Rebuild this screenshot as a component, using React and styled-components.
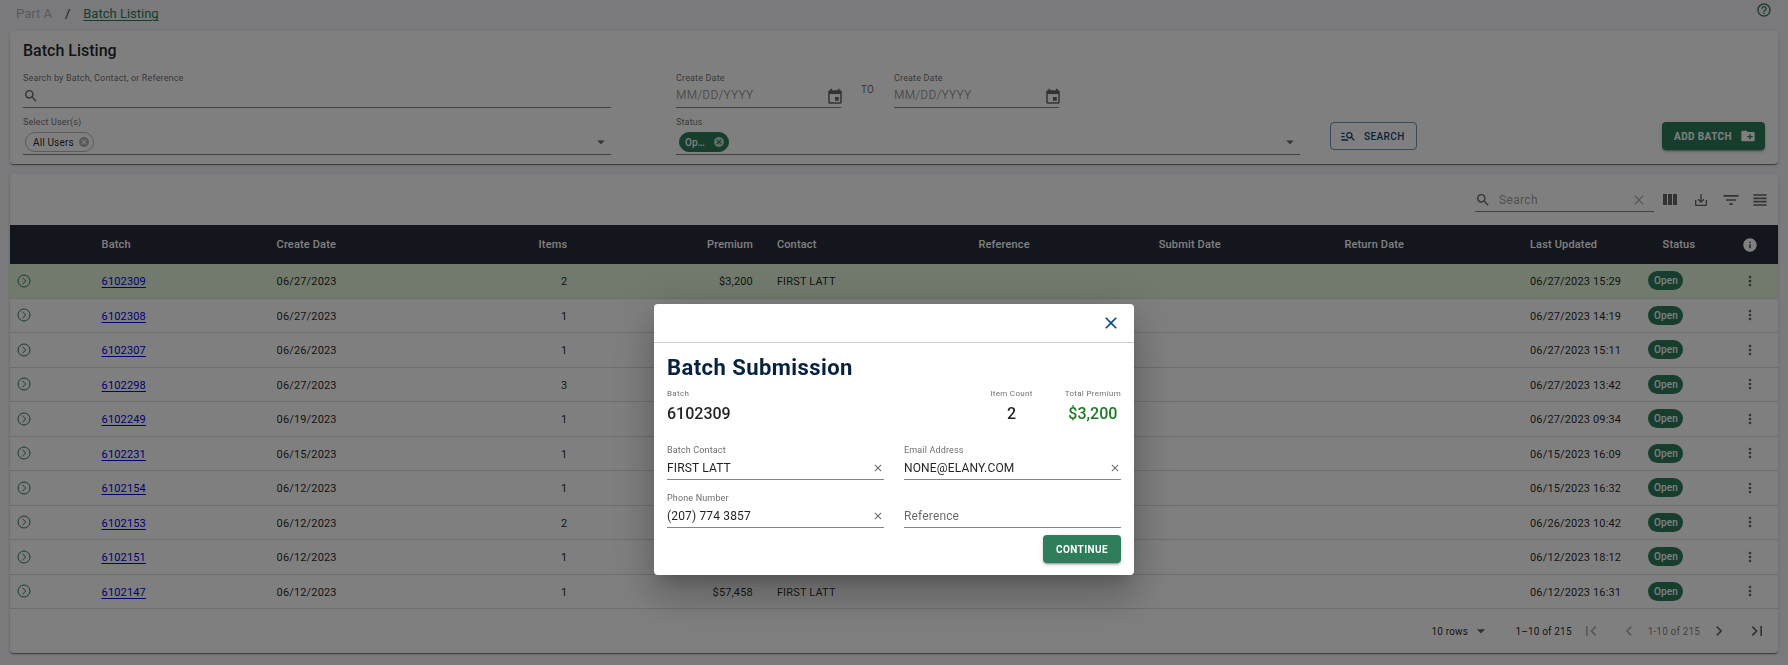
import React, { useState } from "react";
import styled, { createGlobalStyle, css } from "styled-components";
import {
  MdSearch, MdCancel, MdArrowDropDown, MdEvent, MdManageSearch, MdCreateNewFolder,
  MdHelpOutline, MdClose, MdSaveAlt, MdFilterList, MdViewHeadline,
  MdInfo, MdMoreVert, MdChevronLeft, MdChevronRight, MdFirstPage, MdLastPage,
} from "react-icons/md";

const green = "#2e7d5b";
const ink = "rgba(0, 0, 0, 0.87)";
const muted = "rgba(0, 0, 0, 0.6)";

const GlobalStyle = createGlobalStyle`
  * { box-sizing: border-box; }
  body {
    margin: 0;
    background: #f4f4f9;
    color: ${ink};
    font-family: Roboto, "Liberation Sans", sans-serif;
    font-size: 11px;
    letter-spacing: 0.014em;
  }
  button, input, select { font: inherit; letter-spacing: inherit; color: inherit; }
  svg { display: block; flex: none; }
`;

const Page = styled.div`
  padding: 0 10px 12px;
`;

const TopBar = styled.header`
  display: flex;
  justify-content: space-between;
  align-items: flex-start;
  height: 31px;
  padding: 2px 6px 0;
`;

const Breadcrumb = styled.nav`
  display: flex;
  gap: 13px;
  padding-top: 4px;
  font-size: 13px;
  line-height: 16px;
  letter-spacing: normal;
`;

const CrumbDisabled = styled.span`
  color: #b4b4b8;
`;

const CrumbLink = styled.a`
  color: ${green};
  text-underline-offset: 2px;
`;

const IconButton = styled.button`
  display: inline-flex;
  align-items: center;
  justify-content: center;
  flex: none;
  width: ${(p) => p.$width || "auto"};
  padding: 0;
  border: 0;
  background: none;
  color: ${(p) => p.$color || muted};
  cursor: pointer;
`;

const Card = styled.section`
  background: #fff;
  border-radius: 4px;
  box-shadow: 0 2px 1px -1px rgba(0, 0, 0, 0.3), 0 1px 1px rgba(0, 0, 0, 0.24), 0 1px 3px rgba(0, 0, 0, 0.12);
`;

const FilterCard = styled(Card)`
  padding: 10px 13px 9px;
`;

const CardTitle = styled.h1`
  margin: 0 0 11px;
  font-size: 16px;
  font-weight: 500;
  line-height: 20px;
  letter-spacing: normal;
`;

const Filters = styled.form`
  display: flex;
`;

const FilterColumn = styled.div`
  display: flex;
  flex-direction: column;
  gap: 8px;
  flex: ${(p) => p.$grow} 1 0;
  min-width: 0;
  margin-right: ${(p) => p.$after};
`;

const Field = styled.div`
  flex: ${(p) => p.$flex || "none"};
  min-width: 0;
`;

const Label = styled.label`
  display: block;
  height: 12px;
  font-size: 9px;
  line-height: 12px;
  color: ${muted};
`;

const Control = styled.div`
  display: flex;
  align-items: center;
  height: ${(p) => (p.$tall ? "27px" : "24px")};
  border-bottom: 1px solid rgba(0, 0, 0, 0.48);
  padding: ${(p) => p.$pad || "0"};
  color: ${muted};
`;

const TextInput = styled.input`
  flex: 1;
  min-width: 0;
  padding: 0;
  border: 0;
  outline: 0;
  background: none;
  color: ${ink};
  font-size: 12px;
  line-height: 16px;
  &::placeholder { color: ${(p) => p.$hint || "rgba(0, 0, 0, 0.4)"}; opacity: 1; }
`;

const DateRow = styled.div`
  display: flex;
  align-items: center;
`;

const DateControl = styled(Control)`
  width: 165px;
  input { padding-bottom: 2px; }
  button { margin: 2px -3px 0 0; }
`;

const To = styled.span`
  width: 53px;
  text-align: center;
  font-size: 10px;
  line-height: 12px;
  color: ${muted};
`;

const Chip = styled.span`
  display: inline-flex;
  align-items: center;
  gap: 4px;
  height: 20px;
  padding: 0 3px 0 7px;
  border: 1px solid #b8b8b8;
  border-radius: 10px;
  font-size: 10px;
  color: ${ink};
  ${(p) => p.$filled && css`
    gap: 8px;
    padding: 0 3px 0 5px;
    border-color: ${green};
    background: ${green};
    color: #fff;
    font-weight: 500;
  `}
`;

const Actions = styled.div`
  display: flex;
  justify-content: space-between;
  align-self: flex-end;
  flex: none;
  width: 435px;
  margin-bottom: 5px;
`;

const Button = styled.button`
  display: inline-flex;
  align-items: center;
  justify-content: center;
  gap: 8px;
  height: 28px;
  padding: ${(p) => p.$pad || "0 13px"};
  border: 0;
  border-radius: 4px;
  background: ${green};
  color: #fff;
  font-size: 10px;
  font-weight: 700;
  letter-spacing: 0.04em;
  text-transform: uppercase;
  box-shadow: 0 3px 1px -2px rgba(0, 0, 0, 0.2), 0 2px 2px rgba(0, 0, 0, 0.14), 0 1px 5px rgba(0, 0, 0, 0.12);
  cursor: pointer;
`;

const OutlineButton = styled(Button)`
  border: 1px solid #6f93bd;
  background: none;
  color: #12467f;
  font-weight: 500;
  box-shadow: none;
`;

const TableCard = styled(Card)`
  margin-top: 10px;
`;

const Toolbar = styled.div`
  display: flex;
  justify-content: flex-end;
  align-items: center;
  height: 51px;
  padding-right: 4px;
`;

const ToolbarSearch = styled.label`
  display: flex;
  align-items: center;
  gap: 8px;
  width: 179px;
  height: 25px;
  padding: 1px 7px 0 0;
  border-bottom: 1px solid rgba(0, 0, 0, 0.48);
  color: ${muted};
  letter-spacing: 0.03em;
`;

const Table = styled.table`
  width: 100%;
  table-layout: fixed;
  border-collapse: separate;
  border-spacing: 0;
  line-height: 1.5;
`;

const Col = styled.col`
  width: ${(p) => p.$width};
`;

const Th = styled.th`
  height: 39px;
  padding: 1px 12px 0;
  background: #282c3a;
  color: #fff;
  font-weight: 500;
  text-align: ${(p) => p.$align || "left"};
  svg { margin: 0 auto; }
`;

const Td = styled.td`
  padding: 10px 12px 7px;
  border-bottom: 1px solid #dcdcdc;
  text-align: ${(p) => p.$align || "left"};
  white-space: nowrap;
`;

const IconTd = styled(Td)`
  padding: ${(p) => (p.$align === "center" ? "0" : "0 7px")};
  vertical-align: middle;
  button { vertical-align: middle; }
`;

const PillTd = styled(Td)`
  padding: 7px 12px;
`;

const Row = styled.tr`
  background: ${(p) => (p.$selected ? "#e2f5d8" : "transparent")};
`;

const BatchLink = styled.a`
  color: #0000ee;
  text-underline-offset: 2px;
`;

const Pill = styled.span`
  display: flex;
  align-items: center;
  justify-content: center;
  width: 35px;
  height: 19px;
  border-radius: 10px;
  background: ${green};
  color: #fff;
  font-size: 10px;
  font-weight: 500;
`;

const Footer = styled.footer`
  display: flex;
  justify-content: flex-end;
  align-items: center;
  height: 44px;
  padding-right: 2px;
  font-size: 10px;
`;

const RowsPicker = styled.span`
  display: flex;
  align-items: center;
  margin-right: 25px;
  svg { margin-left: -20px; color: ${muted}; pointer-events: none; }
`;

const RowsSelect = styled.select`
  width: 59px;
  padding: 0;
  border: 0;
  background: none;
  appearance: none;
`;

const PageRange = styled.span`
  color: ${(p) => (p.$light ? "rgba(0, 0, 0, 0.5)" : ink)};
`;

const Backdrop = styled.div`
  position: fixed;
  inset: 0;
  display: flex;
  justify-content: center;
  align-items: flex-start;
  padding-top: 304px;
  background: rgba(0, 0, 0, 0.5);
`;

const Dialog = styled.div`
  width: 480px;
  border-radius: 4px;
  background: #fff;
  box-shadow: 0 11px 15px -7px rgba(0, 0, 0, 0.2), 0 24px 38px 3px rgba(0, 0, 0, 0.14), 0 9px 46px 8px rgba(0, 0, 0, 0.12);
`;

const DialogHeader = styled.div`
  display: flex;
  justify-content: flex-end;
  align-items: center;
  height: 39px;
  padding-right: 13px;
  border-bottom: 1px solid #ccc;
`;

const DialogBody = styled.form`
  padding: 12px 13px;
`;

const DialogTitle = styled.h2`
  margin: 0 0 8px;
  color: #06223f;
  font-size: 22px;
  font-weight: 700;
  line-height: 26px;
  letter-spacing: 0.02em;
`;

const Summary = styled.div`
  display: flex;
  gap: 32px;
  margin-bottom: 19px;
`;

const Stat = styled.div`
  text-align: ${(p) => (p.$first ? "left" : "center")};
  margin-right: ${(p) => (p.$first ? "auto" : "0")};
`;

const StatLabel = styled.div`
  color: ${muted};
  font-size: 8px;
  line-height: 10px;
  letter-spacing: 0.04em;
`;

const StatValue = styled.div`
  margin-top: 4px;
  font-size: 16px;
  font-weight: 500;
  line-height: 22px;
  letter-spacing: normal;
  color: ${(p) => (p.$money ? "#1b7a24" : ink)};
`;

const FieldGrid = styled.div`
  display: grid;
  grid-template-columns: 1fr 1fr;
  gap: 12px 20px;
`;

const FloatLabel = styled(Label)`
  visibility: ${(p) => (p.$hidden ? "hidden" : "visible")};
`;

const DialogActions = styled.div`
  display: flex;
  justify-content: flex-end;
  margin-top: 7px;
`;

function ExpandIcon() {
  return (
    <svg width="14" height="14" viewBox="0 0 14 14" fill="none" stroke="currentColor" strokeWidth="1">
      <circle cx="7" cy="7" r="6" />
      <path d="M5.5 3.8 8.8 7 5.5 10.2" />
    </svg>
  );
}

function ColumnsIcon() {
  return (
    <svg width="16" height="12" viewBox="0 0 16 12" fill="currentColor">
      <path d="M1 0h4v11H1zM6 0h4v11H6zM11 0h4v11h-4z" />
    </svg>
  );
}

const columns = [
  { name: "", width: "4.5%" },
  { name: "Batch", width: "9.9%" },
  { name: "Create Date", width: "10%" },
  { name: "Items", width: "7.8%", align: "right" },
  { name: "Premium", width: "10.5%", align: "right" },
  { name: "Contact", width: "11.4%" },
  { name: "Reference", width: "10.2%" },
  { name: "Submit Date", width: "10.5%" },
  { name: "Return Date", width: "10.5%" },
  { name: "Last Updated", width: "6.7%" },
  { name: "Status", width: "4.8%", align: "center" },
  { name: <MdInfo size={16} />, width: "3.2%", align: "center" },
];

const batches = [
  ["6102309", "06/27/2023", 2, "$3,200", "FIRST LATT", "06/27/2023 15:29"],
  ["6102308", "06/27/2023", 1, "", "", "06/27/2023 14:19"],
  ["6102307", "06/26/2023", 1, "", "", "06/27/2023 15:11"],
  ["6102298", "06/27/2023", 3, "", "", "06/27/2023 13:42"],
  ["6102249", "06/19/2023", 1, "", "", "06/27/2023 09:34"],
  ["6102231", "06/15/2023", 1, "", "", "06/15/2023 16:09"],
  ["6102154", "06/12/2023", 1, "", "", "06/15/2023 16:32"],
  ["6102153", "06/12/2023", 2, "", "", "06/26/2023 10:42"],
  ["6102151", "06/12/2023", 1, "", "", "06/12/2023 18:12"],
  ["6102147", "06/12/2023", 1, "$57,458", "FIRST LATT", "06/12/2023 16:31"],
];

function DateField({ id }) {
  return (
    <Field>
      <Label htmlFor={id}>Create Date</Label>
      <DateControl>
        <TextInput id={id} placeholder="MM/DD/YYYY" />
        <IconButton type="button" aria-label="Choose date"><MdEvent size={18} /></IconButton>
      </DateControl>
    </Field>
  );
}

function ClearableField({ id, label, initial }) {
  const [value, setValue] = useState(initial);
  return (
    <Field>
      <FloatLabel htmlFor={id} $hidden={!value}>{label}</FloatLabel>
      <Control>
        <TextInput
          id={id}
          value={value}
          placeholder={label}
          $hint={muted}
          onChange={(e) => setValue(e.target.value)}
        />
        {value && (
          <IconButton type="button" aria-label={`Clear ${label}`} onClick={() => setValue("")}>
            <MdClose size={12} />
          </IconButton>
        )}
      </Control>
    </Field>
  );
}

function FilterPanel() {
  return (
    <FilterCard>
      <CardTitle>Batch Listing</CardTitle>
      <Filters onSubmit={(e) => e.preventDefault()}>
        <FilterColumn $grow={588} $after="65px">
          <Field>
            <Label htmlFor="keyword">Search by Batch, Contact, or Reference</Label>
            <Control $pad="1px 0 0">
              <MdSearch size={16} />
              <TextInput id="keyword" />
            </Control>
          </Field>
          <Field>
            <Label htmlFor="users">Select User(s)</Label>
            <Control $tall $pad="2px 1px 0 2px">
              <Chip>
                All Users
                <IconButton type="button" aria-label="Remove All Users" $color="rgba(0, 0, 0, 0.3)">
                  <MdCancel size={12} />
                </IconButton>
              </Chip>
              <TextInput id="users" />
              <IconButton type="button" aria-label="Show users"><MdArrowDropDown size={18} /></IconButton>
            </Control>
          </Field>
        </FilterColumn>
        <FilterColumn $grow={624} $after="30px">
          <DateRow>
            <DateField id="date-from" />
            <To>TO</To>
            <DateField id="date-to" />
          </DateRow>
          <Field>
            <Label htmlFor="status">Status</Label>
            <Control $tall $pad="2px 1px 0 3px">
              <Chip $filled>
                Op…
                <IconButton type="button" aria-label="Remove Open" $color="rgba(255, 255, 255, 0.7)">
                  <MdCancel size={12} />
                </IconButton>
              </Chip>
              <TextInput id="status" />
              <IconButton type="button" aria-label="Show statuses"><MdArrowDropDown size={18} /></IconButton>
            </Control>
          </Field>
        </FilterColumn>
        <Actions>
          <OutlineButton type="submit" $pad="0 11px 0 9px"><MdManageSearch size={16} />Search</OutlineButton>
          <Button type="button" $pad="0 9px 0 12px">Add Batch<MdCreateNewFolder size={16} /></Button>
        </Actions>
      </Filters>
    </FilterCard>
  );
}

function BatchTable() {
  return (
    <TableCard>
      <Toolbar>
        <ToolbarSearch>
          <MdSearch size={16} />
          <TextInput aria-label="Search table" placeholder="Search" />
          <IconButton type="button" aria-label="Clear search" $color="rgba(0, 0, 0, 0.3)"><MdClose size={16} /></IconButton>
        </ToolbarSearch>
        <IconButton $width="32px" aria-label="Columns"><ColumnsIcon /></IconButton>
        <IconButton $width="30px" aria-label="Export"><MdSaveAlt size={16} /></IconButton>
        <IconButton $width="30px" aria-label="Filter"><MdFilterList size={20} /></IconButton>
        <IconButton $width="28px" aria-label="Density"><MdViewHeadline size={20} /></IconButton>
      </Toolbar>
      <Table>
        <colgroup>
          {columns.map((c, i) => <Col key={i} $width={c.width} />)}
        </colgroup>
        <thead>
          <tr>
            {columns.map((c, i) => <Th key={i} $align={c.align}>{c.name}</Th>)}
          </tr>
        </thead>
        <tbody>
          {batches.map(([batch, created, items, premium, contact, updated], i) => (
            <Row key={batch} $selected={i === 0}>
              <IconTd>
                <IconButton aria-label={`Expand ${batch}`} $color={green}><ExpandIcon /></IconButton>
              </IconTd>
              <Td><BatchLink href={`#${batch}`}>{batch}</BatchLink></Td>
              <Td>{created}</Td>
              <Td $align="right">{items}</Td>
              <Td $align="right">{premium}</Td>
              <Td>{contact}</Td>
              <Td />
              <Td />
              <Td />
              <Td>{updated}</Td>
              <PillTd><Pill>Open</Pill></PillTd>
              <IconTd $align="center">
                <IconButton aria-label={`Actions for ${batch}`}><MdMoreVert size={16} /></IconButton>
              </IconTd>
            </Row>
          ))}
        </tbody>
      </Table>
      <Footer>
        <RowsPicker>
          <RowsSelect aria-label="Rows per page" defaultValue="10">
            <option value="10">10 rows</option>
            <option value="25">25 rows</option>
          </RowsSelect>
          <MdArrowDropDown size={20} />
        </RowsPicker>
        <PageRange>1–10 of 215</PageRange>
        <IconButton $width="38px" $color="rgba(0, 0, 0, 0.3)" aria-label="First page" disabled><MdFirstPage size={20} /></IconButton>
        <IconButton $width="38px" $color="rgba(0, 0, 0, 0.3)" aria-label="Previous page" disabled><MdChevronLeft size={20} /></IconButton>
        <PageRange $light>1-10 of 215</PageRange>
        <IconButton $width="38px" aria-label="Next page"><MdChevronRight size={20} /></IconButton>
        <IconButton $width="38px" aria-label="Last page"><MdLastPage size={20} /></IconButton>
      </Footer>
    </TableCard>
  );
}

function SubmissionDialog() {
  return (
    <Backdrop>
      <Dialog role="dialog" aria-modal="true" aria-labelledby="dialog-title">
        <DialogHeader>
          <IconButton $color="#0f4c8c" aria-label="Close"><MdClose size={20} /></IconButton>
        </DialogHeader>
        <DialogBody onSubmit={(e) => e.preventDefault()}>
          <DialogTitle id="dialog-title">Batch Submission</DialogTitle>
          <Summary>
            <Stat $first>
              <StatLabel>Batch</StatLabel>
              <StatValue>6102309</StatValue>
            </Stat>
            <Stat>
              <StatLabel>Item Count</StatLabel>
              <StatValue>2</StatValue>
            </Stat>
            <Stat>
              <StatLabel>Total Premium</StatLabel>
              <StatValue $money>$3,200</StatValue>
            </Stat>
          </Summary>
          <FieldGrid>
            <ClearableField id="contact" label="Batch Contact" initial="FIRST LATT" />
            <ClearableField id="email" label="Email Address" initial="NONE@ELANY.COM" />
            <ClearableField id="phone" label="Phone Number" initial="(207) 774 3857" />
            <ClearableField id="reference" label="Reference" initial="" />
          </FieldGrid>
          <DialogActions>
            <Button type="submit">Continue</Button>
          </DialogActions>
        </DialogBody>
      </Dialog>
    </Backdrop>
  );
}

export default function App() {
  return (
    <>
      <GlobalStyle />
      <Page>
        <TopBar>
          <Breadcrumb aria-label="Breadcrumb">
            <CrumbDisabled>Part A</CrumbDisabled>
            <span>/</span>
            <CrumbLink href="#batches">Batch Listing</CrumbLink>
          </Breadcrumb>
          <IconButton $color={green} aria-label="Help"><MdHelpOutline size={16} /></IconButton>
        </TopBar>
        <FilterPanel />
        <BatchTable />
      </Page>
      <SubmissionDialog />
    </>
  );
}
